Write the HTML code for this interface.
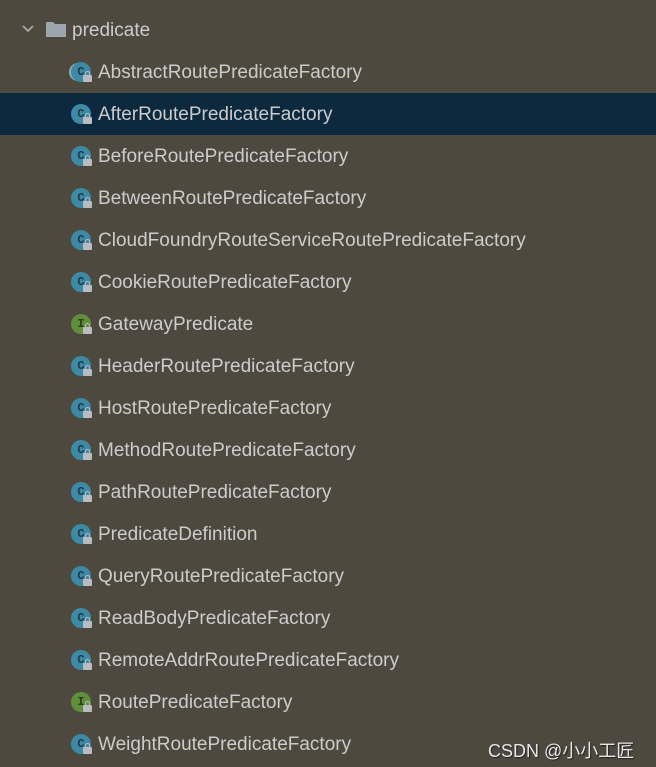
<!DOCTYPE html>
<html><head><meta charset="utf-8"><style>
body{margin:0;width:656px;height:767px;background:#4e493f;overflow:hidden;font-family:"Liberation Sans","DejaVu Sans",sans-serif;position:relative}
.r{position:absolute;left:0;width:656px;height:42px}
.t{position:absolute;left:98px;top:11px;font-size:19px;color:#cccccc;white-space:nowrap;line-height:22px}
.ic{position:absolute;left:71px;top:11px;width:20px;height:20px;border-radius:50%;background:#3d8aa6}
.ic b{position:absolute;left:0;top:0;width:20px;text-align:center;font:bold 12px/20px "Liberation Mono",monospace;color:#1f3a44}
.ic.i{background:#5f8f3a}.ic.i b{color:#2d3b1e}
.lk{position:absolute;left:83px;top:24px;width:9px;height:7px;background:#b9bdc2;border-radius:1px}
.lk:before{content:"";position:absolute;left:2px;top:-4px;width:3px;height:4px;border:1px solid #b9bdc2;border-bottom:0;border-radius:3px 3px 0 0}
.sel{background:#0d293e}
</style></head><body>
<div class="r" style="top:9px">
<svg style="position:absolute;left:21px;top:15px" width="14" height="10"><path d="M2 2 L7 7 L12 2" stroke="#a8a8a8" stroke-width="1.8" fill="none"/></svg>
<svg style="position:absolute;left:45px;top:11px" width="22" height="18"><path d="M1 2 H8 L10 4 H21 V17 H1 Z" fill="#9ea6ad"/></svg>
<div class="t" style="left:72px">predicate</div></div>
<div class="r" style="top:51px"><div class="ic" style="box-shadow:-3px 0 0 -1px #9aa"><b>C</b></div><div class="lk"></div><div class="t">AbstractRoutePredicateFactory</div></div>
<div class="r sel" style="top:93px"><div class="ic"><b>C</b></div><div class="lk"></div><div class="t">AfterRoutePredicateFactory</div></div>
<div class="r" style="top:135px"><div class="ic"><b>C</b></div><div class="lk"></div><div class="t">BeforeRoutePredicateFactory</div></div>
<div class="r" style="top:177px"><div class="ic"><b>C</b></div><div class="lk"></div><div class="t">BetweenRoutePredicateFactory</div></div>
<div class="r" style="top:219px"><div class="ic"><b>C</b></div><div class="lk"></div><div class="t">CloudFoundryRouteServiceRoutePredicateFactory</div></div>
<div class="r" style="top:261px"><div class="ic"><b>C</b></div><div class="lk"></div><div class="t">CookieRoutePredicateFactory</div></div>
<div class="r" style="top:303px"><div class="ic i"><b>I</b></div><div class="lk"></div><div class="t">GatewayPredicate</div></div>
<div class="r" style="top:345px"><div class="ic"><b>C</b></div><div class="lk"></div><div class="t">HeaderRoutePredicateFactory</div></div>
<div class="r" style="top:387px"><div class="ic"><b>C</b></div><div class="lk"></div><div class="t">HostRoutePredicateFactory</div></div>
<div class="r" style="top:429px"><div class="ic"><b>C</b></div><div class="lk"></div><div class="t">MethodRoutePredicateFactory</div></div>
<div class="r" style="top:471px"><div class="ic"><b>C</b></div><div class="lk"></div><div class="t">PathRoutePredicateFactory</div></div>
<div class="r" style="top:513px"><div class="ic"><b>C</b></div><div class="lk"></div><div class="t">PredicateDefinition</div></div>
<div class="r" style="top:555px"><div class="ic"><b>C</b></div><div class="lk"></div><div class="t">QueryRoutePredicateFactory</div></div>
<div class="r" style="top:597px"><div class="ic"><b>C</b></div><div class="lk"></div><div class="t">ReadBodyPredicateFactory</div></div>
<div class="r" style="top:639px"><div class="ic"><b>C</b></div><div class="lk"></div><div class="t">RemoteAddrRoutePredicateFactory</div></div>
<div class="r" style="top:681px"><div class="ic i"><b>I</b></div><div class="lk"></div><div class="t">RoutePredicateFactory</div></div>
<div class="r" style="top:723px"><div class="ic"><b>C</b></div><div class="lk"></div><div class="t">WeightRoutePredicateFactory</div></div>
<div style="position:absolute;left:488px;top:737px;font-size:18px;color:#e6e6e6;font-family:'Liberation Sans','Noto Sans CJK SC',sans-serif;text-shadow:1px 1px 1px #222">CSDN @小小工匠</div>
</body></html>
